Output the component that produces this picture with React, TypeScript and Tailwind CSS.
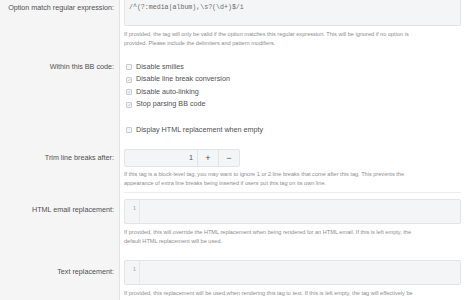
import React from "react";

const Check = ({ checked }: { checked?: boolean }) => (
  <span className="ml-[2px] mr-[4px] flex h-[6px] w-[6px] shrink-0 items-center justify-center rounded-[1px] border border-[#c9cbce] bg-[#f3f4f5]">
    {checked && (
      <svg width="6" height="6" viewBox="0 0 10 10" className="block">
        <path d="M2 5.2 L4.2 7.4 L8.2 2.6" fill="none" stroke="#a9b9c0" strokeWidth="1.6" />
      </svg>
    )}
  </span>
);

const CheckItem = ({ label, checked }: { label: string; checked?: boolean }) => (
  <div className="flex h-[12.5px] items-center text-[7.2px] text-[#505050]">
    <Check checked={checked} />
    <span className="leading-[12.5px]">{label}</span>
  </div>
);

const Help = ({ lines, mt }: { lines: string[]; mt: string }) => (
  <div className={`${mt} text-[5.6px] leading-[9px] text-[#8d8d8d]`}>
    {lines.map((l, i) => (
      <div key={i} className="whitespace-nowrap">
        {l}
      </div>
    ))}
  </div>
);

const CodeArea = () => (
  <div className="flex h-[25px] rounded-[2px] border border-[#e3e4e6] bg-[#f4f5f6]">
    <div className="w-[15px] shrink-0 border-r border-[#e8e9ea] pr-[3px] pt-[3px] text-right font-['DejaVu_Sans_Mono',monospace] text-[5.5px] leading-[10px] text-[#a9a9a9]">
      1
    </div>
    <div className="flex-1" />
  </div>
);

export default function App() {
  return (
    <div className="h-[300px] w-[466px] overflow-hidden bg-white font-['Liberation_Sans',Arial,sans-serif]">
      {/* Row 1 */}
      <div className="flex">
        <div className="w-[120px] shrink-0 border-r border-[#e2e2e2] bg-[#f5f5f5] pr-[5px] pt-[3px] text-right text-[7.2px] leading-[10px] text-[#505050]">
          Option match regular expression:
        </div>
        <div className="flex-1 pb-[10px] pl-[4px] pr-[5px]">
          <div className="h-[26px] rounded-b-[2px] border border-t-0 border-[#e3e4e6] bg-[#f4f5f6] pl-[4px] pt-[3px] font-['Liberation_Mono',monospace] text-[6.6px] leading-[10px] text-[#6a6a6a]">
            /^(?:media|album),\s?(\d+)$/i
          </div>
          <Help
            mt="mt-[4px]"
            lines={[
              "If provided, the tag will only be valid if the option matches this regular expression. This will be ignored if no option is",
              "provided. Please include the delimiters and pattern modifiers.",
            ]}
          />
        </div>
      </div>

      {/* Row 2 */}
      <div className="flex">
        <div className="w-[120px] shrink-0 border-r border-[#e2e2e2] bg-[#f5f5f5] pr-[5px] pt-[2.75px] text-right text-[7.2px] leading-[12.5px] text-[#505050]">
          Within this BB code:
        </div>
        <div className="flex-1 pb-[6.75px] pl-[4px] pr-[5px] pt-[2.75px]">
          <CheckItem label="Disable smilies" />
          <CheckItem label="Disable line break conversion" checked />
          <CheckItem label="Disable auto-linking" checked />
          <CheckItem label="Stop parsing BB code" checked />
          <div className="mt-[13px]">
            <CheckItem label="Display HTML replacement when empty" />
          </div>
        </div>
      </div>

      {/* Row 3 */}
      <div className="flex">
        <div className="w-[120px] shrink-0 border-r border-[#e2e2e2] bg-[#f5f5f5] pr-[5px] pt-[6px] text-right text-[7.2px] leading-[18px] text-[#505050]">
          Trim line breaks after:
        </div>
        <div className="flex-1 pl-[4px] pr-[5px] pt-[6px]">
          <div className="flex h-[18px] w-[116px] rounded-[2px] border border-[#e3e4e6] bg-[#f4f5f6] text-[7.2px] text-[#505050]">
            <div className="flex flex-1 items-center justify-end pr-[4px]">1</div>
            <div className="flex w-[21px] items-center justify-center border-l border-[#e3e4e6] text-[9px] leading-none">+</div>
            <div className="flex w-[21px] items-center justify-center border-l border-[#e3e4e6] text-[9px] leading-none">−</div>
          </div>
          <div className="border-b border-[#ececec] pb-[4px]">
            <Help
              mt="mt-[3px]"
              lines={[
                "If this tag is a block-level tag, you may want to ignore 1 or 2 line breaks that come after this tag. This prevents the",
                "appearance of extra line breaks being inserted if users put this tag on its own line.",
              ]}
            />
          </div>
        </div>
      </div>

      {/* Row 4 */}
      <div className="flex">
        <div className="w-[120px] shrink-0 border-r border-[#e2e2e2] bg-[#f5f5f5] pr-[5px] pt-[12px] text-right text-[7.2px] leading-[10px] text-[#505050]">
          HTML email replacement:
        </div>
        <div className="flex-1 pb-[8px] pl-[4px] pr-[5px] pt-[6px]">
          <CodeArea />
          <Help
            mt="mt-[4px]"
            lines={[
              "If provided, this will override the HTML replacement when being rendered for an HTML email. If this is left empty, the",
              "default HTML replacement will be used.",
            ]}
          />
        </div>
      </div>

      {/* Row 5 */}
      <div className="flex">
        <div className="w-[120px] shrink-0 border-r border-[#e2e2e2] bg-[#f5f5f5] pr-[5px] pt-[13px] text-right text-[7.2px] leading-[10px] text-[#505050]">
          Text replacement:
        </div>
        <div className="flex-1 pb-[8px] pl-[4px] pr-[5px] pt-[6px]">
          <CodeArea />
          <Help
            mt="mt-[4px]"
            lines={[
              "If provided, this replacement will be used when rendering this tag to text. If this is left empty, the tag will effectively be",
            ]}
          />
        </div>
      </div>
    </div>
  );
}
